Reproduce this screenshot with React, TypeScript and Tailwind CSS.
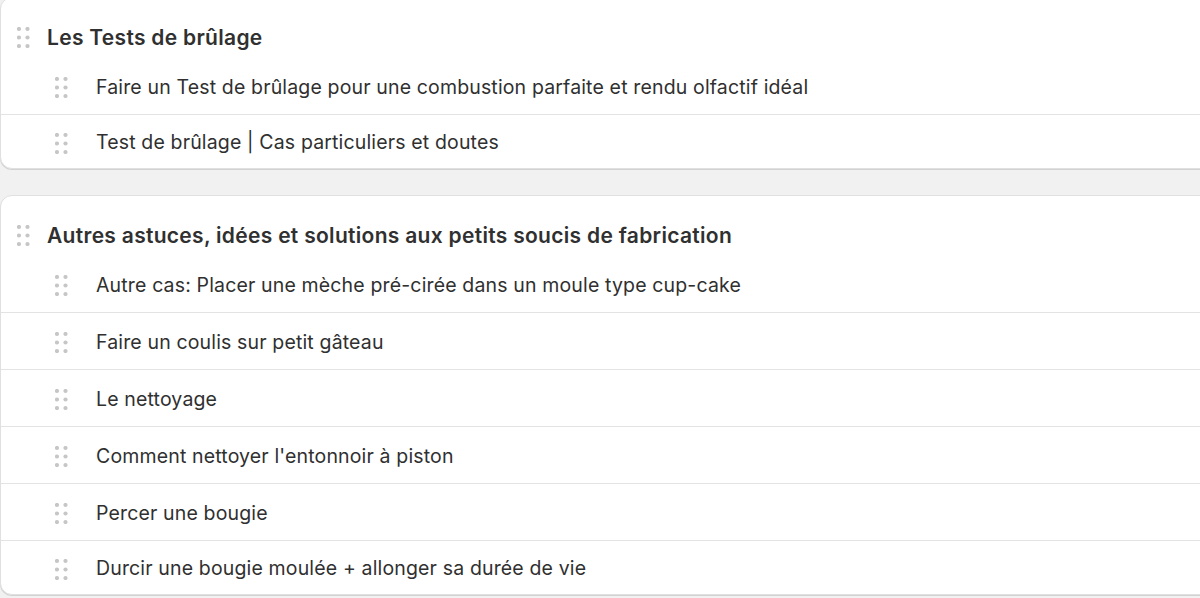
const groups = [
  {
    title: "Les Tests de brûlage",
    items: [
      "Faire un Test de brûlage pour une combustion parfaite et rendu olfactif idéal",
      "Test de brûlage | Cas particuliers et doutes",
    ],
  },
  {
    title: "Autres astuces, idées et solutions aux petits soucis de fabrication",
    items: [
      "Autre cas: Placer une mèche pré-cirée dans un moule type cup-cake",
      "Faire un coulis sur petit gâteau",
      "Le nettoyage",
      "Comment nettoyer l'entonnoir à piston",
      "Percer une bougie",
      "Durcir une bougie moulée + allonger sa durée de vie",
    ],
  },
];

function Grip() {
  return (
    <svg width="13" height="21" viewBox="0 0 13 21" className="shrink-0">
      {[0, 1, 2].map((r) =>
        [0, 1].map((c) => (
          <circle key={`${r}-${c}`} cx={2 + c * 8.5} cy={2 + r * 8.5} r="2.1" fill="#c6c6c6" />
        ))
      )}
    </svg>
  );
}

function Group({ title, items }: { title: string; items: string[] }) {
  return (
    <div className="mr-[-24px] rounded-xl border border-[#e0e0e0] bg-white shadow-[0_1px_0_#d2d2d2]">
      <div className="flex h-[60px] items-center gap-[17px] pl-[16px] pt-[19px]">
        <Grip />
        <h2 className="text-[21px] font-semibold tracking-[0.3px] text-[#303030]">{title}</h2>
      </div>
      {items.map((it, i) => {
        const last = i === items.length - 1;
        return (
          <div
            key={it}
            className={`flex items-center gap-[28px] pl-[54px] pt-[3px] ${last ? "h-[53px]" : "h-[57px] border-b border-[#e3e3e3]"}`}
          >
            <Grip />
            <span className="text-[19.5px] tracking-[0.15px] text-[#303030]">{it}</span>
          </div>
        );
      })}
    </div>
  );
}

export default function App() {
  return (
    <div
      className="h-[598px] overflow-hidden bg-[#f1f1f2]"
      style={{ fontFamily: "Inter, 'Noto Sans', sans-serif" }}
    >
      <div className="-mt-[3px] flex flex-col gap-[26px]">
        {groups.map((g) => (
          <Group key={g.title} title={g.title} items={g.items} />
        ))}
      </div>
    </div>
  );
}
